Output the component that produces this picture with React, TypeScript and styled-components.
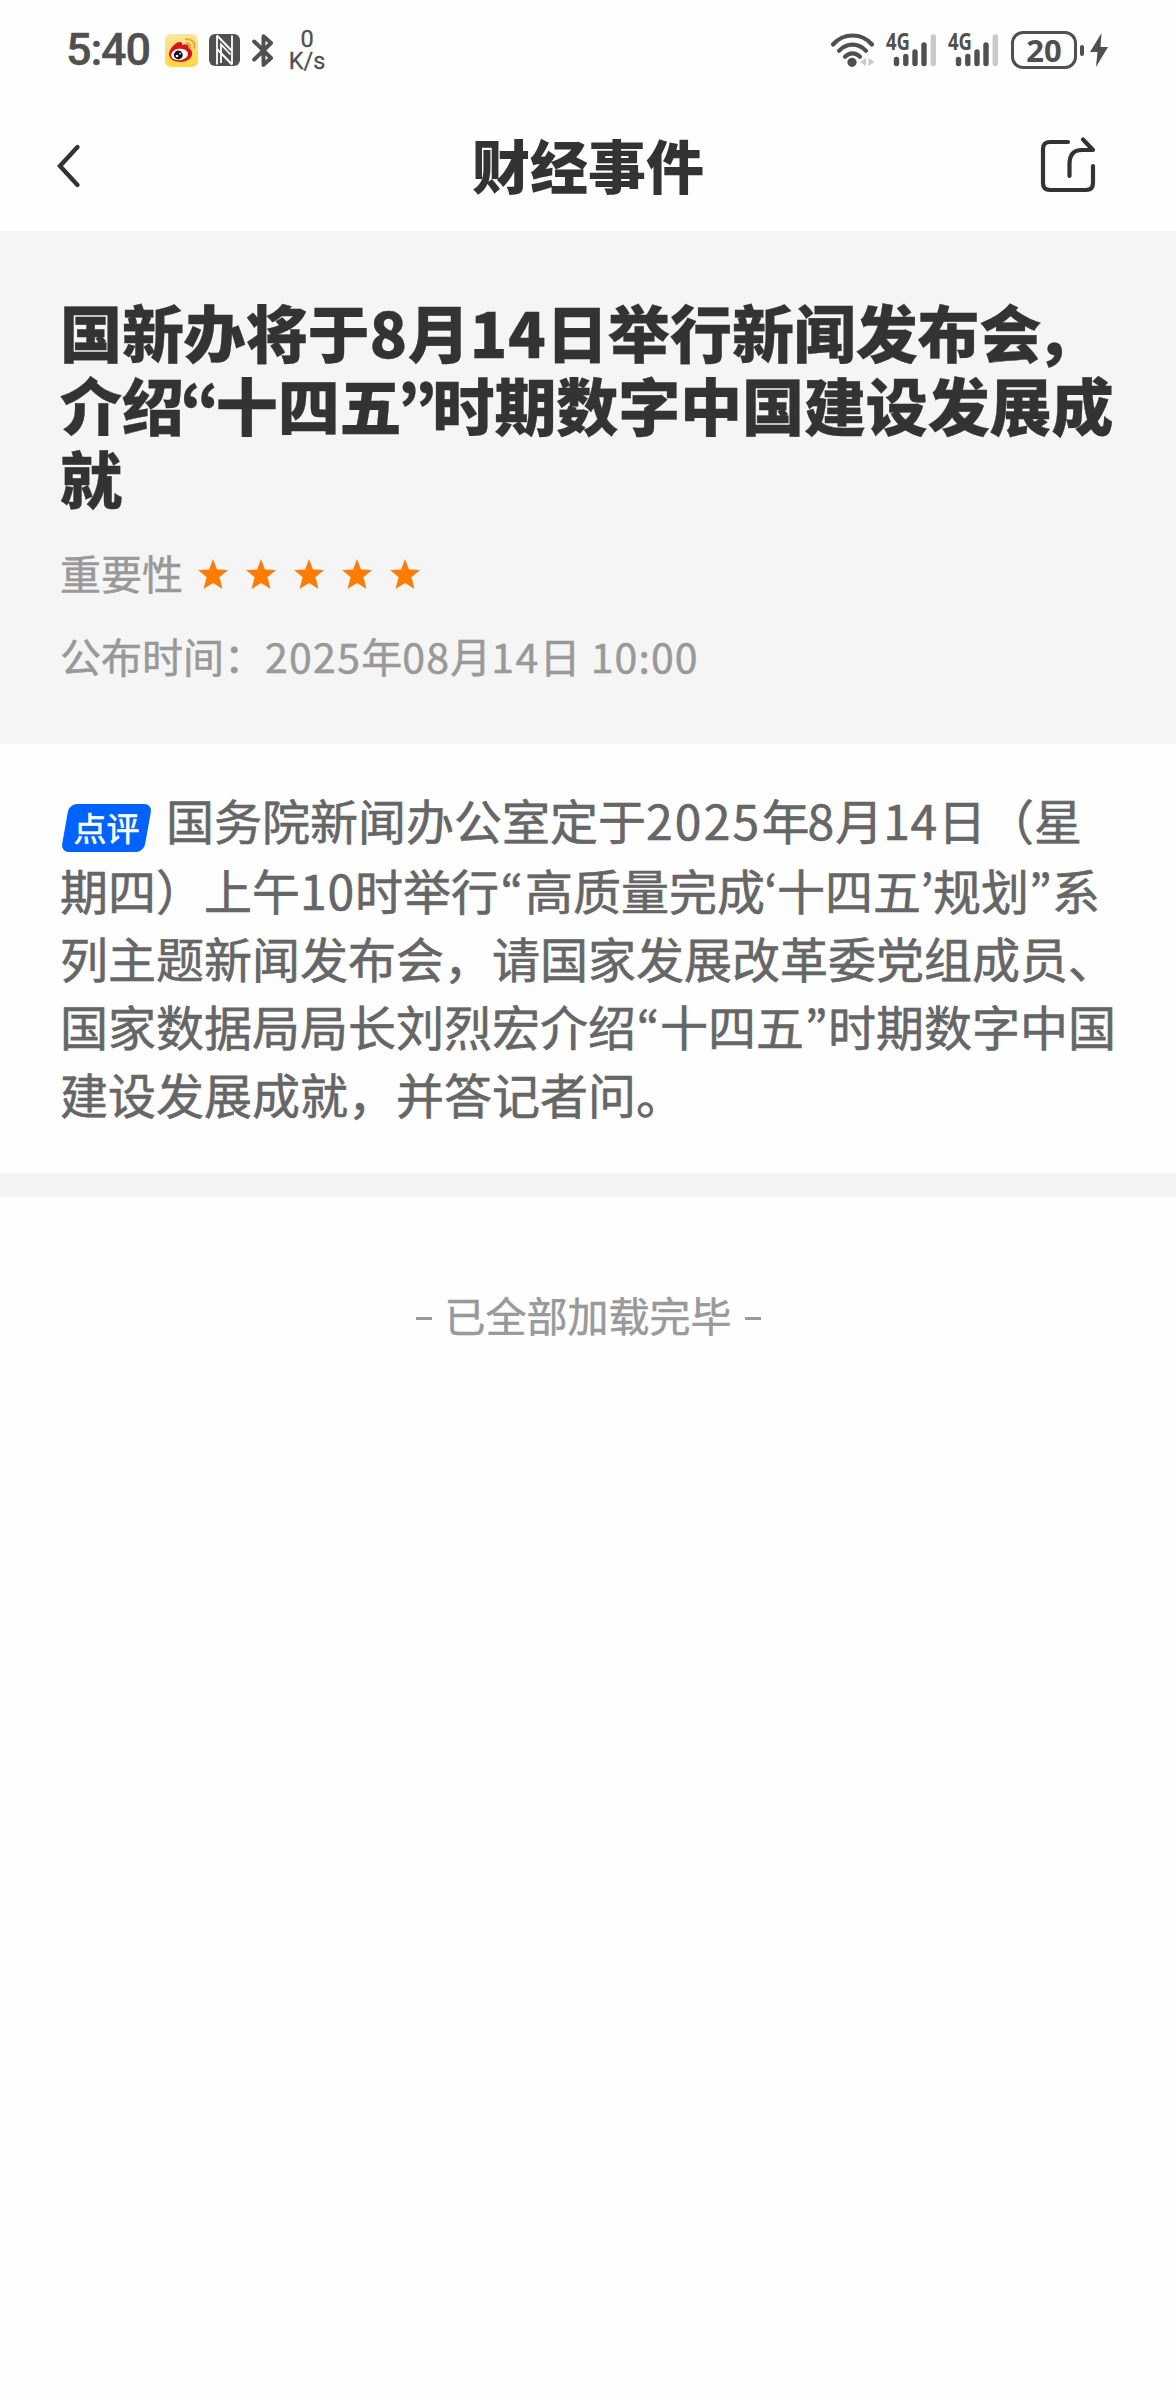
import React from "react";
import styled, { createGlobalStyle } from "styled-components";

const cjk = `"Noto Sans CJK SC", sans-serif`;

const GlobalStyle = createGlobalStyle`
  html, body { margin: 0; padding: 0; background: #fefefe; }
  * { box-sizing: border-box; }
`;

const Page = styled.div`
  width: 1176px;
  min-height: 2400px;
  display: flex;
  flex-direction: column;
  background: #fefefe;
  font-family: ${cjk};
  color: #333;
`;

const StatusBar = styled.header`
  height: 100px;
  padding: 0 68px 0 66px;
  display: flex;
  justify-content: space-between;
  align-items: center;
  color: #505050;
`;

const StatusGroup = styled.div`
  display: flex;
  align-items: center;
`;

const Clock = styled.span`
  width: 99px;
  font: 500 45px/54px Roboto, sans-serif;
  letter-spacing: -1.2px;
  -webkit-text-stroke: 0.4px currentColor;
`;

const Icon = styled.svg<{ $gap?: number }>`
  display: block;
  flex: none;
  overflow: visible;
  margin-left: ${(p) => p.$gap ?? 0}px;
`;

const NetSpeed = styled.div`
  margin-left: 14px;
  width: 38px;
  display: flex;
  flex-direction: column;
  align-items: center;
  font: 400 23.5px/22px Roboto, sans-serif;
  -webkit-text-stroke: 0.3px currentColor;
`;

const Battery = styled.div`
  width: 66px;
  height: 38px;
  margin-left: 11px;
  border: 3px solid #505050;
  border-radius: 12px;
  display: flex;
  align-items: center;
  justify-content: center;
  font: 700 31px/32px "Noto Sans", sans-serif;
`;

const NavBar = styled.nav`
  height: 131px;
  padding: 0 78px 4px 56px;
  display: grid;
  grid-template-columns: 60px 1fr 60px;
  align-items: center;
`;

const NavTitle = styled.h1`
  margin: 0;
  text-align: center;
  font-size: 58px;
  line-height: 80px;
  font-weight: 900;
  padding-left: 22px;
`;

const Summary = styled.section`
  height: 513px;
  padding: 64px 0 0 60px;
  background: #f5f5f5;
`;

const Headline = styled.h2`
  margin: 0;
  font-size: 62px;
  line-height: 73px;
  font-weight: 900;
  -webkit-text-stroke: 0.3px currentColor;
`;

const Line = styled.span<{ $spacing?: number; $height?: number }>`
  display: block;
  white-space: nowrap;
  letter-spacing: ${(p) => p.$spacing ?? 0}px;
  ${(p) => (p.$height ? `line-height: 70px; height: ${p.$height}px;` : "")}
`;

const Num = styled.span<{ $spacing: number }>`
  letter-spacing: ${(p) => p.$spacing}px;
`;

const Quote = styled.span<{ $w: number }>`
  display: inline-flex;
  justify-content: center;
  width: ${(p) => p.$w}px;
  font-family: "Noto Sans CJK KR", sans-serif;
  line-height: 1;
`;

const MetaRow = styled.div<{ $top: number }>`
  margin-top: ${(p) => p.$top}px;
  height: 60px;
  display: flex;
  align-items: center;
  font-size: 41px;
  line-height: 58px;
  color: #999;
  white-space: pre;
  -webkit-text-stroke: 0.5px currentColor;
`;

const Stars = styled.div`
  display: flex;
  gap: 18px;
  margin: 4px 0 0 15px;
`;

const Comment = styled.section`
  height: 429px;
  padding: 40px 0 0 60px;
  font-size: 48px;
  line-height: 68px;
  color: #666;
  -webkit-text-stroke: 0.6px currentColor;
`;

const Badge = styled.span`
  position: relative;
  display: inline-flex;
  justify-content: center;
  width: 91px;
  height: 48px;
  margin: 0 14px 0 1px;
  vertical-align: -1px;
  color: #fff;
  font-size: 33px;
  line-height: 46px;
  z-index: 0;
  &::before {
    content: "";
    position: absolute;
    inset: 0 4px;
    z-index: -1;
    border-radius: 8px;
    background: #0062ff;
    transform: skewX(-10deg);
  }
`;

const Divider = styled.div`
  height: 24px;
  background: #f4f4f4;
`;

const EndNote = styled.footer`
  padding-top: 87px;
  text-align: center;
  font-size: 41px;
  line-height: 60px;
  color: #999;
  -webkit-text-stroke: 0.5px currentColor;
`;

const Dash = styled.span<{ $side: "left" | "right" }>`
  display: inline-block;
  width: 16px;
  height: 3px;
  background: #999;
  vertical-align: 12px;
  margin-${(p) => (p.$side === "left" ? "right" : "left")}: 13px;
`;

const Signal = ({ gap }: { gap: number }) => (
  <Icon $gap={gap} width="52" height="36" viewBox="0 0 52 36">
    <text x="0" y="18" fontFamily="Noto Sans, sans-serif" fontWeight="700" fontSize="22.5" textLength="24" lengthAdjust="spacingAndGlyphs" fill="#505050">4G</text>
    <g strokeWidth="5.4" strokeLinecap="round" stroke="#505050">
      <path d="M10.5 27.5v4M19.8 24.5v7M29 20v11.5M38 13v18.500" />
      <path d="M47.300 5v26.500" stroke="#cacaca" />
    </g>
  </Icon>
);

const Star = () => (
  <Icon width="30" height="30" viewBox="0 0 30 30">
    <path fill="#ff7c00" d="M15 0l3.900 10.600 11.100.500-8.600 7.200L24.500 30 15 24 5.500 30l3.100-11.700L0 11.100l11.100-.500z" />
  </Icon>
);

export default function App() {
  return (
    <Page>
      <GlobalStyle />
      <StatusBar>
        <StatusGroup>
          <Clock>5:40</Clock>
          <Icon width="33" height="33" viewBox="0 0 33 33">
            <defs>
              <linearGradient id="wb" x1="0" y1="0" x2="0" y2="1">
                <stop offset="0" stopColor="#fbe6a0" />
                <stop offset="1" stopColor="#ffd83c" />
              </linearGradient>
            </defs>
            <rect width="33" height="33" rx="6" fill="url(#wb)" />
            <path fill="#d9141a" d="M4 20c0-5 6-11 10-12 3-.6 3.500 1.300 3 3 3-1.200 7-1.500 6.600 2-.2 1.500 3.600 2 3.600 6.500 0 5-6 8.500-12 8.500S4 25 4 20z" />
            <ellipse cx="14.500" cy="20.500" rx="8.500" ry="5.700" fill="#fff" transform="rotate(-8 14.500 20.500)" />
            <circle cx="13.300" cy="21" r="4.400" fill="#111" />
            <circle cx="12" cy="22" r="1.300" fill="#fff" />
            <circle cx="15" cy="19.600" r=".9" fill="#fff" />
            <path d="M21.500 9.300c2.800-.3 4.300 1.500 3.800 4M20.800 5.300c6-.8 9.600 3 8.500 8.700" fill="none" stroke="#eda63a" strokeWidth="2" strokeLinecap="round" />
          </Icon>
          <Icon $gap={11} width="31" height="32" viewBox="0 0 31 32">
            <rect width="31" height="32" rx="6" fill="#505050" />
            <path d="M8 1.500V30.500M23 1.500V30.500" stroke="#fefefe" strokeWidth="1.800" />
            <path d="M8 1.500L22.500 16.500M8.500 15.500L23 30.500" fill="none" stroke="#fefefe" strokeWidth="2" />
            <path d="M12 29V10.500L21.500 20.500" fill="none" stroke="#fefefe" strokeWidth="1.800" />
          </Icon>
          <Icon $gap={12} width="22" height="33" viewBox="0 0 22 33">
            <path d="M2.200 7.500L19 24 11.500 30.800V2.200L19 9 2.200 25.500" fill="none" stroke="#505050" strokeWidth="4" strokeLinejoin="round" strokeLinecap="round" />
          </Icon>
          <NetSpeed>
            <span>0</span>
            <span>K/s</span>
          </NetSpeed>
        </StatusGroup>
        <StatusGroup>
          <Icon width="45" height="36" viewBox="0 0 45 36">
            <g fill="none" stroke="#505050" strokeWidth="4.200" strokeLinecap="round">
              <path d="M3 12.500c10.500-12 28.500-12 39 0" />
              <path d="M9 18.800c7.500-8.300 19.500-8.300 27 0" />
              <path d="M15 24.800c4.500-4.600 10.500-4.600 15 0" />
            </g>
            <circle cx="22" cy="30.300" r="4.600" fill="#505050" />
            <path d="M36 26v8l-6-4zM38.500 26v8l6-4z" fill="#cacaca" />
          </Icon>
          <Signal gap={11} />
          <Signal gap={10} />
          <Battery>20</Battery>
          <Icon $gap={3} width="4" height="11" viewBox="0 0 4 11">
            <rect width="4" height="11" rx="2" fill="#505050" />
          </Icon>
          <Icon $gap={6} width="18" height="34" viewBox="0 0 18 34">
            <path d="M11.500 0L0 19h7.500L6 34 18 14h-7.500z" fill="#505050" />
          </Icon>
        </StatusGroup>
      </StatusBar>
      <NavBar>
        <Icon width="26" height="46" viewBox="0 -2 26 46">
          <path d="M21.500 4L4 23l17.500 19" fill="none" stroke="#333" strokeWidth="4.400" strokeLinecap="round" />
        </Icon>
        <NavTitle>财经事件</NavTitle>
        <Icon width="60" height="60" viewBox="0 0 60 60">
          <path d="M30 8H12q-7 0-7 7V49q0 7 7 7H48q7 0 7-7V32M31.500 42V30Q31.500 16 44 16H55L45 5.500" fill="none" stroke="#333" strokeWidth="4.200" strokeLinecap="round" strokeLinejoin="round" />
        </Icon>
      </NavBar>
      <Summary>
        <Headline>
          <Line $spacing={-0.1}>国新办将于<Num $spacing={0.5}>8</Num>月<Num $spacing={0.5}>14</Num>日举行新闻发布<Num $spacing={-6}>会</Num>，</Line>
          <Line $spacing={-0.1}>介绍<Quote $w={32}>“</Quote>十四五<Quote $w={31}>”</Quote>时期数字中国建设发展成</Line>
          <Line>就</Line>
        </Headline>
        <MetaRow $top={28}>
          重要性
          <Stars>
            {[0, 1, 2, 3, 4].map((i) => <Star key={i} />)}
          </Stars>
        </MetaRow>
        <MetaRow $top={23}>
          公布时间：<Num $spacing={1.3}>2025</Num>年<Num $spacing={1.3}>08</Num>月<Num $spacing={1.3}>14</Num>日<Num $spacing={1.1}> 10:00</Num>
        </MetaRow>
      </Summary>
      <Comment>
        <Line $height={71}><Badge>点评</Badge>国务院新闻办公室定于<Num $spacing={2.2}>2025</Num><Num $spacing={-2}>年</Num><Num $spacing={1.2}>8</Num>月<Num $spacing={0.7}>14</Num>日（星</Line>
        <Line>期四）上午<Num $spacing={0.8}>10</Num>时举行<Quote $w={26}>“</Quote>高质量完成<Quote $w={12}>‘</Quote>十四五<Quote $w={12}>’</Quote>规划<Quote $w={23}>”</Quote>系</Line>
        <Line>列主题新闻发布会，请国家发展改革委党组成员、</Line>
        <Line>国家数据局局长刘烈宏介绍<Quote $w={24}>“</Quote>十四五<Quote $w={24}>”</Quote>时期数字中国</Line>
        <Line>建设发展成就，并答记者问。</Line>
      </Comment>
      <Divider />
      <EndNote>
        <Dash $side="left" />已全部加载完毕<Dash $side="right" />
      </EndNote>
    </Page>
  );
}
